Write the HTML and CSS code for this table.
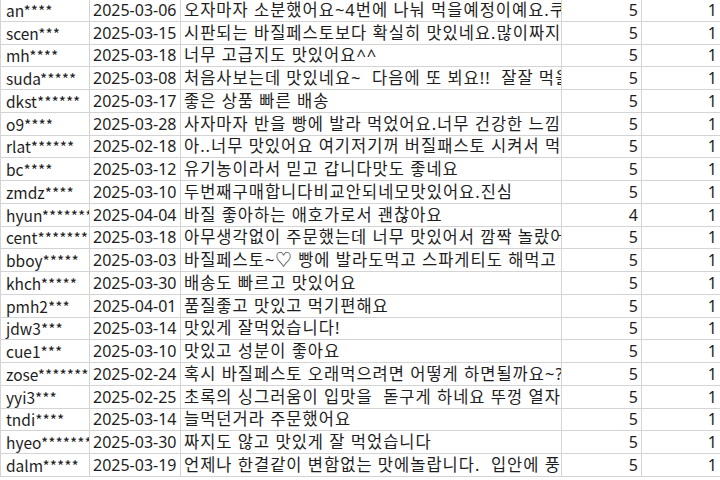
FILE: index.html
```html
<!DOCTYPE html>
<html lang="ko">
<head>
<meta charset="utf-8">
<link rel="stylesheet" href="styles.css">
</head>
<body>
<table class="sheet">
<colgroup><col class="c-id"><col class="c-date"><col class="c-text"><col class="c-score"><col class="c-cnt"></colgroup>
<tbody>
<tr><td>an****</td><td>2025-03-06</td><td>오자마자 소분했어요~4번에 나눠 먹을예정이예요.쿠팡에서 샀어요</td><td class="num">5</td><td class="num">1</td></tr>
<tr><td>scen***</td><td>2025-03-15</td><td>시판되는 바질페스토보다 확실히 맛있네요.많이짜지않고</td><td class="num">5</td><td class="num">1</td></tr>
<tr><td>mh****</td><td>2025-03-18</td><td>너무 고급지도 맛있어요^^</td><td class="num">5</td><td class="num">1</td></tr>
<tr><td>suda*****</td><td>2025-03-08</td><td>처음사보는데 맛있네요~ &nbsp;다음에 또 뵈요!! &nbsp;잘잘 먹을게요</td><td class="num">5</td><td class="num">1</td></tr>
<tr><td>dkst******</td><td>2025-03-17</td><td>좋은 상품 빠른 배송</td><td class="num">5</td><td class="num">1</td></tr>
<tr><td>o9****</td><td>2025-03-28</td><td>사자마자 반을 빵에 발라 먹었어요.너무 건강한 느낌이에요</td><td class="num">5</td><td class="num">1</td></tr>
<tr><td>rlat******</td><td>2025-02-18</td><td>아..너무 맛있어요 여기저기꺼 버질패스토 시켜서 먹어봤는데</td><td class="num">5</td><td class="num">1</td></tr>
<tr><td>bc****</td><td>2025-03-12</td><td>유기농이라서 믿고 갑니다맛도 좋네요</td><td class="num">5</td><td class="num">1</td></tr>
<tr><td>zmdz****</td><td>2025-03-10</td><td>두번째구매합니다비교안되네모맛있어요.진심</td><td class="num">5</td><td class="num">1</td></tr>
<tr><td>hyun*******</td><td>2025-04-04</td><td>바질 좋아하는 애호가로서 괜찮아요</td><td class="num">4</td><td class="num">1</td></tr>
<tr><td>cent********</td><td>2025-03-18</td><td>아무생각없이 주문했는데 너무 맛있어서 깜짝 놀랐어요</td><td class="num">5</td><td class="num">1</td></tr>
<tr><td>bboy*****</td><td>2025-03-03</td><td>바질페스토~♡ 빵에 발라도먹고 스파게티도 해먹고</td><td class="num">5</td><td class="num">1</td></tr>
<tr><td>khch*****</td><td>2025-03-30</td><td>배송도 빠르고 맛있어요</td><td class="num">5</td><td class="num">1</td></tr>
<tr><td>pmh2***</td><td>2025-04-01</td><td>품질좋고 맛있고 먹기편해요</td><td class="num">5</td><td class="num">1</td></tr>
<tr><td>jdw3***</td><td>2025-03-14</td><td>맛있게 잘먹었습니다!</td><td class="num">5</td><td class="num">1</td></tr>
<tr><td>cue1***</td><td>2025-03-10</td><td>맛있고 성분이 좋아요</td><td class="num">5</td><td class="num">1</td></tr>
<tr><td>zose*******</td><td>2025-02-24</td><td>혹시 바질페스토 오래먹으려면 어떻게 하면될까요~?</td><td class="num">5</td><td class="num">1</td></tr>
<tr><td>yyi3***</td><td>2025-02-25</td><td>초록의 싱그러움이 입맛을 &nbsp;돋구게 하네요 뚜껑 열자마자</td><td class="num">5</td><td class="num">1</td></tr>
<tr><td>tndi****</td><td>2025-03-14</td><td>늘먹던거라 주문했어요</td><td class="num">5</td><td class="num">1</td></tr>
<tr><td>hyeo*******</td><td>2025-03-30</td><td>짜지도 않고 맛있게 잘 먹었습니다</td><td class="num">5</td><td class="num">1</td></tr>
<tr><td>dalm*****</td><td>2025-03-19</td><td>언제나 한결같이 변함없는 맛에놀랍니다. &nbsp;입안에 풍미가</td><td class="num">5</td><td class="num">1</td></tr>
</tbody>
</table>
</body>
</html>
```
FILE: styles.css
```css
html, body {
  margin: 0;
  padding: 0;
  background: #ffffff;
  overflow: hidden;
}
.sheet {
  border-collapse: collapse;
  table-layout: fixed;
  width: 740px;
  margin-top: -2px;
  font-family: "Noto Sans", "Noto Sans CJK KR", sans-serif;
  font-size: 16px;
  color: #1e1e1e;
}
.c-id { width: 89px; }
.c-date { width: 91px; }
.c-text { width: 381px; }
.c-score { width: 80px; }
.c-cnt { width: 99px; }
.sheet tr { height: 22.75px; }
.sheet td {
  border: 1px solid #d4d4d4;
  padding: 0 3px 0 4px;
  white-space: nowrap;
  overflow: hidden;
  line-height: 20px;
  height: 21.75px;
  box-sizing: border-box;
}
.sheet td:first-child {
  font-family: "Noto Sans CJK KR", "Noto Sans", sans-serif;
  font-size: 15.5px;
  padding-left: 5px;
}
.sheet td:nth-child(2) { padding-left: 3px; }
.sheet td:nth-child(3) {
  padding-left: 3px;
  font-size: 16.5px;
  letter-spacing: 1px;
}
.sheet td.num { text-align: right; padding-right: 3px; }
.sheet td:last-child { padding-right: 23px; }
```
